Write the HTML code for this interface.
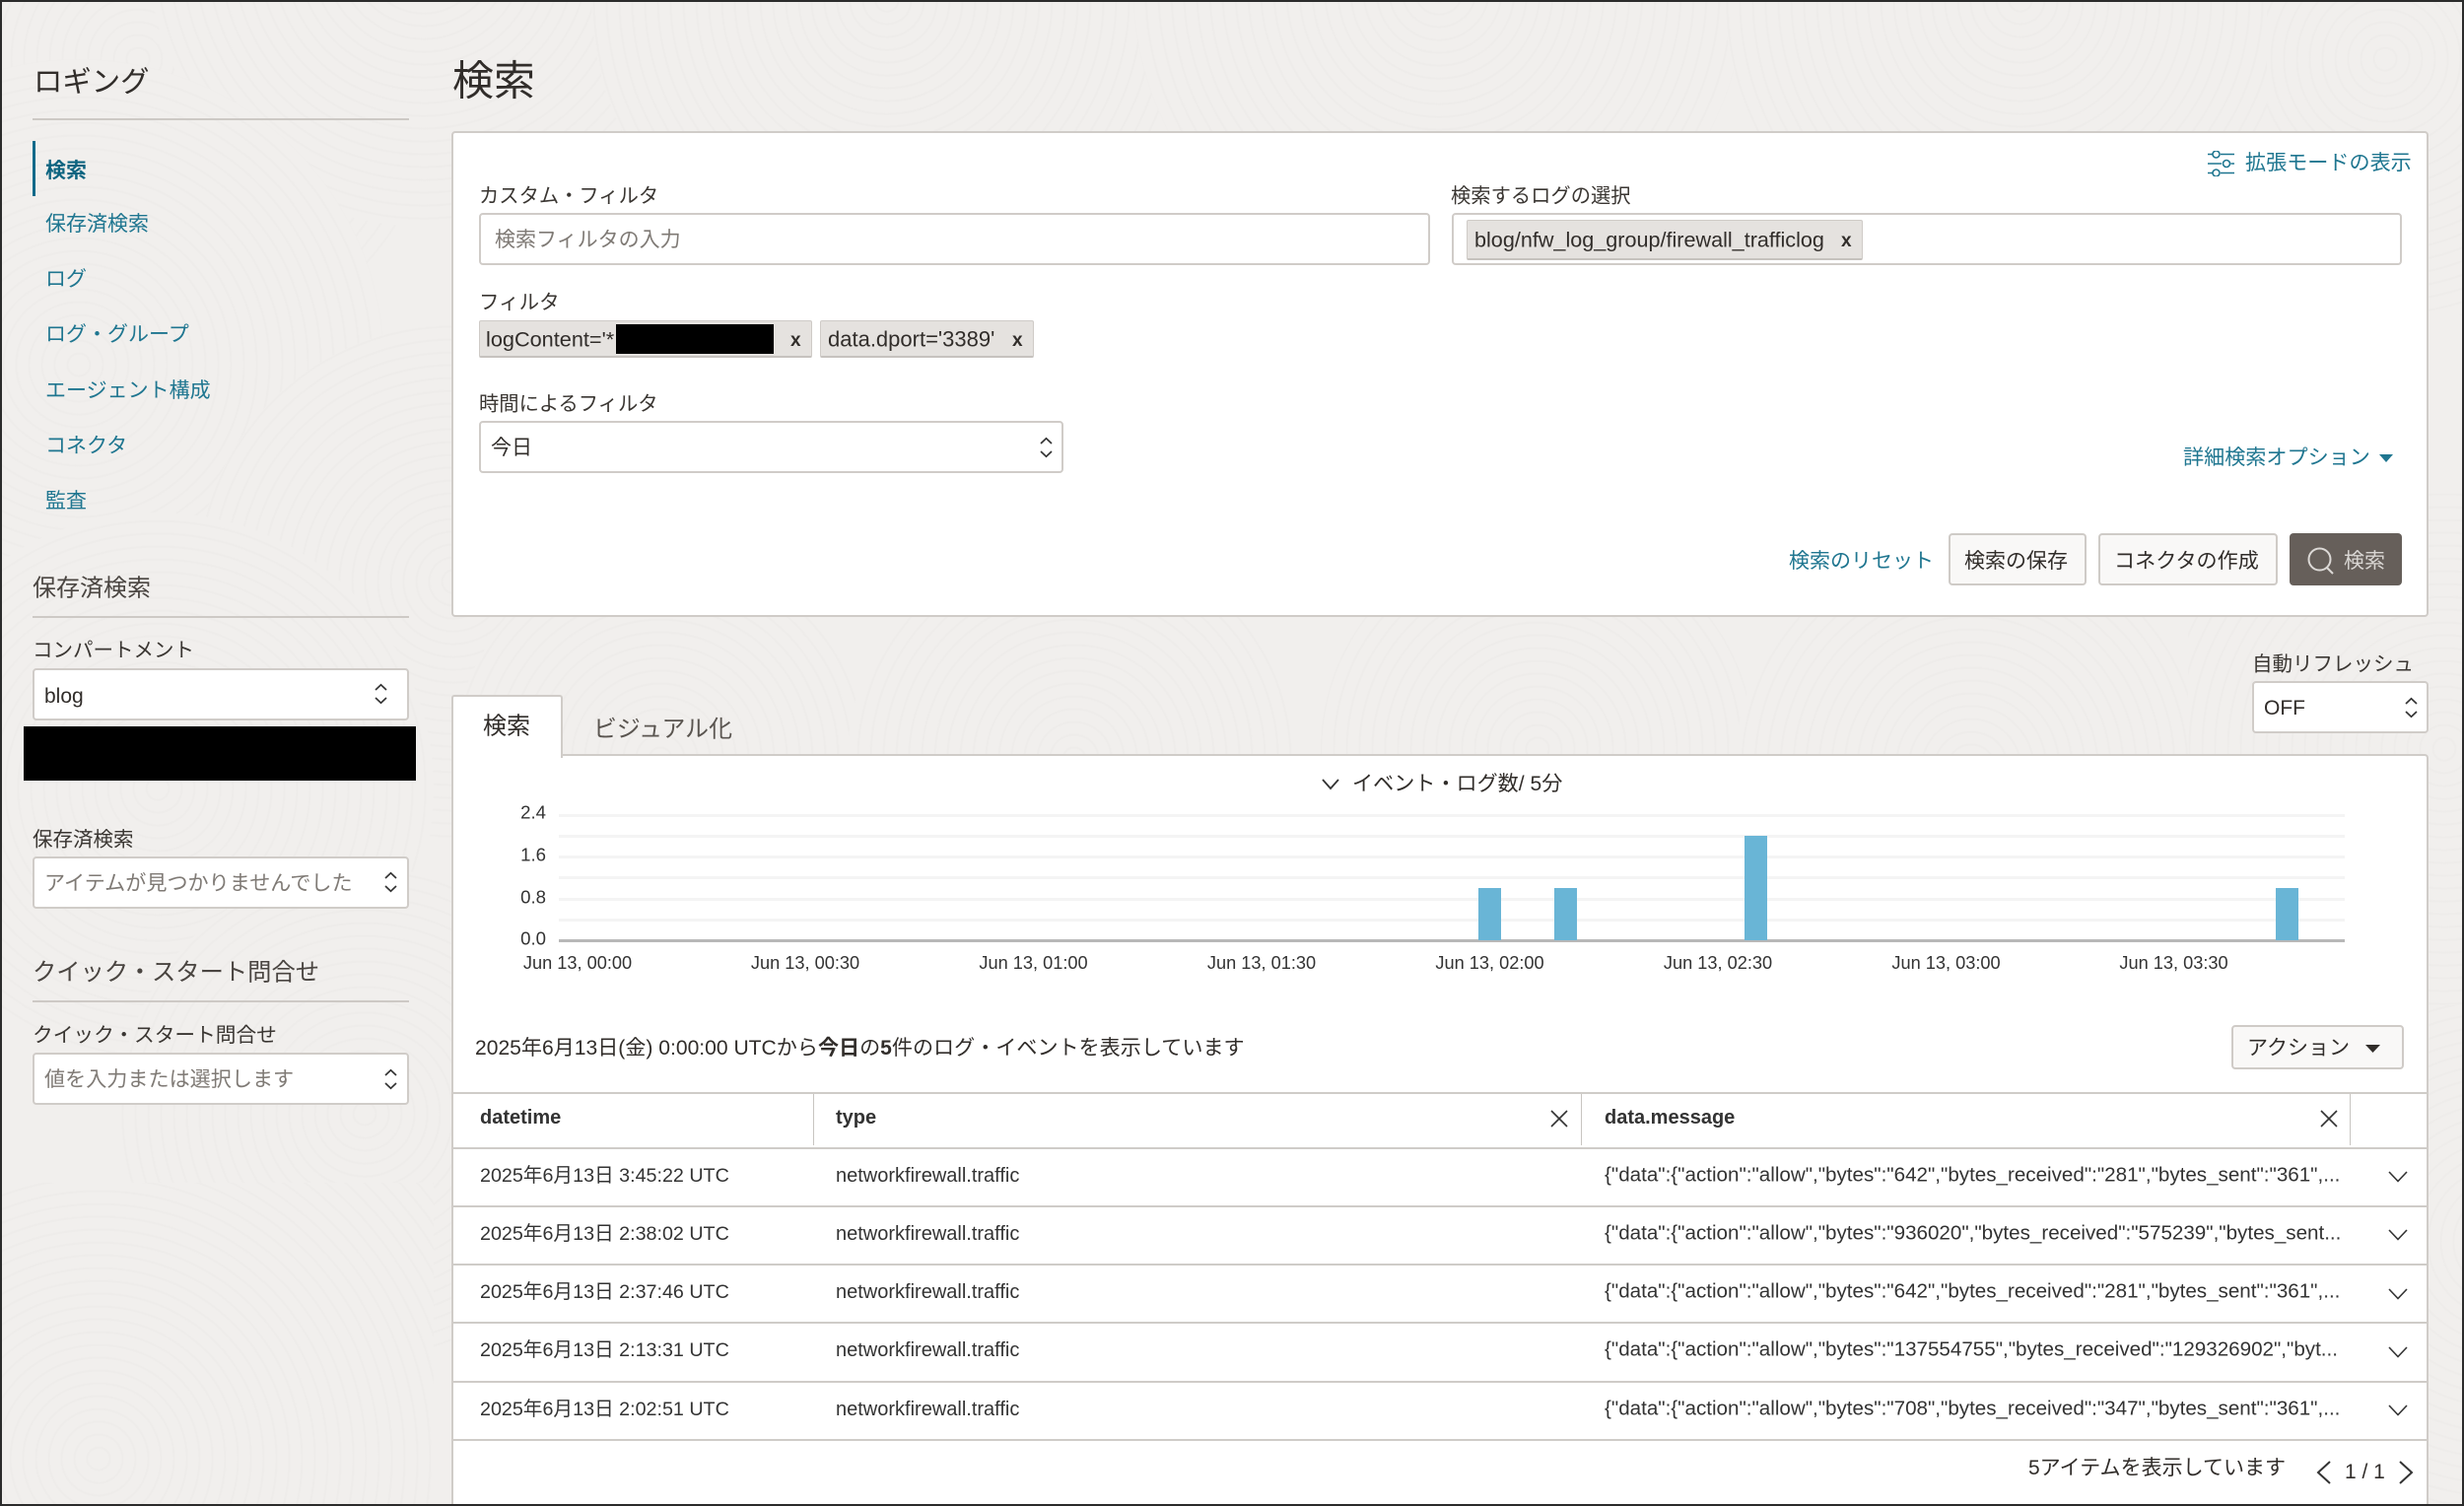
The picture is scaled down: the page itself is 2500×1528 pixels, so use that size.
<!DOCTYPE html>
<html lang="ja">
<head>
<meta charset="utf-8">
<title>検索</title>
<style>
html{margin:0;padding:0;width:2500px;height:1528px;overflow:hidden;}
body{margin:0;padding:0;width:2500px;height:1528px;overflow:hidden;position:relative;background:#f1efed;font-family:"Liberation Sans","Noto Sans CJK JP",sans-serif;color:#312d2a;}
.abs{position:absolute;box-sizing:border-box;}
.t{position:absolute;line-height:1;white-space:nowrap;transform:translateY(calc(-50% + 1.5px));font-size:21px;}
.link{color:#1f7690;}
.lab{font-size:20.5px;color:#3a3632;}
.ph{color:#7f7a75;}
.box{position:absolute;box-sizing:border-box;background:#fff;border:2px solid #d0ccc8;border-radius:4px;}
.chip{position:absolute;box-sizing:border-box;background:#e5e2df;border:1px solid #cfcbc7;border-bottom:2px solid #c6c2be;border-radius:2px;}
.btn{position:absolute;box-sizing:border-box;background:#f9f8f7;border:2px solid #cfcbc7;border-radius:4px;}
.bg{position:absolute;left:0;top:0;width:2500px;height:1528px;overflow:hidden;}
.ring{position:absolute;border-radius:50%;background:repeating-radial-gradient(circle,#f1efed 0 10px,#eeecea 11px 12px,#f1efed 13px);}
.hl{position:absolute;height:2px;background:#cdc9c5;}
.rowl{position:absolute;left:460px;width:2002px;height:2px;background:#cfccc8;}
.grid{position:absolute;left:567px;width:1812px;height:3px;background:#f4f4f4;}
.xl{position:absolute;top:977px;line-height:1;white-space:nowrap;transform:translate(-50%,-50%);font-size:18.2px;color:#333;}
.yl{position:absolute;right:1946px;line-height:1;transform:translateY(-50%);font-size:18.6px;color:#333;}
.bar{position:absolute;background:#69b5d6;width:23px;}
.c{position:absolute;font-size:20px;line-height:1;white-space:nowrap;transform:translateY(-50%);color:#333;}
.d{font-size:19.7px;}
.m{font-size:20.6px;}
.x{font-size:19px;font-weight:bold;}
svg{position:absolute;}
</style>
</head>
<body>
<!-- background swirl -->
<div class="bg">
<div class="ring" style="left:-180px;top:-260px;width:640px;height:640px"></div>
<div class="ring" style="left:150px;top:-330px;width:560px;height:560px"></div>
<div class="ring" style="left:-230px;top:60px;width:620px;height:620px"></div>
<div class="ring" style="left:200px;top:330px;width:520px;height:520px"></div>
<div class="ring" style="left:-120px;top:520px;width:560px;height:560px"></div>
<div class="ring" style="left:120px;top:880px;width:500px;height:500px"></div>
<div class="abs" style="left:0;top:1200px;width:440px;height:328px;background:repeating-radial-gradient(circle at 100px 280px,#f1efed 0 10px,#eeecea 11px 12px,#f1efed 13px)"></div>
<div class="ring" style="left:600px;top:-300px;width:600px;height:600px"></div>
<div class="ring" style="left:1150px;top:-320px;width:620px;height:620px"></div>
<div class="ring" style="left:1750px;top:-300px;width:600px;height:600px"></div>
<div class="abs" style="left:2300px;top:0;width:200px;height:320px;background:repeating-radial-gradient(circle at 120px 60px,#f1efed 0 10px,#eeecea 11px 12px,#f1efed 13px)"></div>
<div class="ring" style="left:460px;top:560px;width:420px;height:420px"></div>
<div class="ring" style="left:860px;top:540px;width:460px;height:460px"></div>
<div class="ring" style="left:1340px;top:540px;width:440px;height:440px"></div>
<div class="ring" style="left:1760px;top:540px;width:480px;height:480px"></div>
<div class="abs" style="left:2220px;top:500px;width:280px;height:520px;background:repeating-radial-gradient(circle at 260px 260px,#f1efed 0 10px,#eeecea 11px 12px,#f1efed 13px)"></div>
<div class="abs" style="left:2300px;top:1020px;width:200px;height:508px;background:repeating-radial-gradient(circle at 240px 240px,#f1efed 0 10px,#eeecea 11px 12px,#f1efed 13px)"></div>
</div>

<!-- sidebar -->
<div class="t" style="left:34px;top:82px;font-size:29.4px;color:#312d2a">ロギング</div>
<div class="hl" style="left:33px;top:120px;width:382px"></div>
<div class="abs" style="left:33px;top:143px;width:3px;height:56px;background:#0f6a8a"></div>
<div class="t link" style="left:46px;top:172px;font-weight:bold;color:#0d6480">検索</div>
<div class="t link" style="left:46px;top:226px">保存済検索</div>
<div class="t link" style="left:46px;top:282px">ログ</div>
<div class="t link" style="left:46px;top:338px">ログ・グループ</div>
<div class="t link" style="left:46px;top:395px">エージェント構成</div>
<div class="t link" style="left:46px;top:451px">コネクタ</div>
<div class="t link" style="left:46px;top:507px">監査</div>

<div class="t" style="left:33px;top:596px;font-size:24px;color:#4a4541">保存済検索</div>
<div class="hl" style="left:33px;top:625px;width:382px"></div>
<div class="t lab" style="left:33px;top:659px">コンパートメント</div>
<div class="box" style="left:33px;top:678px;width:382px;height:53px"></div>
<div class="t" style="left:45px;top:705px;color:#312d2a">blog</div>
<svg style="left:380px;top:693px" width="13" height="22" fill="none" stroke="#333" stroke-width="1.7"><path d="M1 7L6.500 1.800L12 7M1 15L6.500 20.200L12 15"/></svg>
<div class="abs" style="left:24px;top:737px;width:398px;height:55px;background:#000"></div>
<div class="t lab" style="left:33px;top:851px">保存済検索</div>
<div class="box" style="left:33px;top:869px;width:382px;height:53px"></div>
<div class="t ph" style="left:45px;top:895px;font-size:21.1px">アイテムが見つかりませんでした</div>
<svg style="left:390px;top:884px" width="13" height="22" fill="none" stroke="#333" stroke-width="1.7"><path d="M1 7L6.500 1.800L12 7M1 15L6.500 20.200L12 15"/></svg>
<div class="t" style="left:33px;top:986px;font-size:24.3px;color:#4a4541">クイック・スタート問合せ</div>
<div class="hl" style="left:33px;top:1015px;width:382px"></div>
<div class="t lab" style="left:33px;top:1050px;font-size:20.7px">クイック・スタート問合せ</div>
<div class="box" style="left:33px;top:1068px;width:382px;height:53px"></div>
<div class="t ph" style="left:45px;top:1094px;font-size:21.1px">値を入力または選択します</div>
<svg style="left:390px;top:1084px" width="13" height="22" fill="none" stroke="#333" stroke-width="1.700"><path d="M1 7L6.500 1.800L12 7M1 15L6.500 20.200L12 15"/></svg>

<!-- title -->
<div class="t" style="left:459px;top:81px;font-size:42px;color:#312d2a">検索</div>

<!-- search card -->
<div class="box" style="left:458px;top:133px;width:2006px;height:493px"></div>

<svg style="left:2240px;top:153px" width="27" height="26" fill="none" stroke="#1f7690" stroke-width="1.600"><path d="M0 3.500H4.500M13 3.500H27M0 13H14M23.500 13H27M0 22.500H4.500M13 22.500H27"/><circle cx="8.500" cy="3.500" r="3.500"/><circle cx="19" cy="13" r="3.500"/><circle cx="8.500" cy="22.500" r="3.500"/></svg>
<div class="t link" style="left:2278px;top:164px;font-size:21.1px">拡張モードの表示</div>

<div class="t lab" style="left:486px;top:198px;font-size:20.3px">カスタム・フィルタ</div>
<div class="box" style="left:486px;top:216px;width:965px;height:53px"></div>
<div class="t ph" style="left:502px;top:242px">検索フィルタの入力</div>

<div class="t lab" style="left:1472px;top:198px;font-size:20.3px">検索するログの選択</div>
<div class="box" style="left:1473px;top:216px;width:964px;height:53px"></div>
<div class="chip" style="left:1488px;top:223px;width:402px;height:41px"></div>
<div class="t" style="left:1496px;top:241.500px;font-size:21.6px">blog/nfw_log_group/firewall_trafficlog</div>
<div class="t x" style="left:1868px;top:243px">x</div>

<div class="t lab" style="left:486px;top:306px">フィルタ</div>
<div class="chip" style="left:486px;top:325px;width:338px;height:38px"></div>
<div class="t" style="left:493px;top:343px;font-size:21.7px">logContent='*</div>
<div class="abs" style="left:625px;top:329px;width:160px;height:30px;background:#000"></div>
<div class="t x" style="left:802px;top:344px">x</div>
<div class="chip" style="left:832px;top:325px;width:217px;height:38px"></div>
<div class="t" style="left:840px;top:343px;font-size:22px">data.dport='3389'</div>
<div class="t x" style="left:1027px;top:344px">x</div>

<div class="t lab" style="left:486px;top:409px;font-size:20.3px">時間によるフィルタ</div>
<div class="box" style="left:486px;top:427px;width:593px;height:53px"></div>
<div class="t" style="left:498px;top:452.500px">今日</div>
<svg style="left:1055px;top:443px" width="13" height="22" fill="none" stroke="#333" stroke-width="1.700"><path d="M1 7L6.500 1.800L12 7M1 15L6.500 20.200L12 15"/></svg>

<div class="t link" style="left:2215px;top:462.500px;font-size:21.1px">詳細検索オプション</div>
<svg style="left:2414px;top:460px" width="14" height="10"><path d="M0 1H14L7 9Z" fill="#1f7690"/></svg>

<div class="t link" style="left:1815px;top:568px">検索のリセット</div>
<div class="btn" style="left:1977px;top:541px;width:140px;height:53px"></div>
<div class="t" style="left:1993px;top:568px">検索の保存</div>
<div class="btn" style="left:2129px;top:541px;width:182px;height:53px"></div>
<div class="t" style="left:2145px;top:568px;font-size:21.1px">コネクタの作成</div>
<div class="abs" style="left:2323px;top:541px;width:114px;height:53px;background:#665f5a;border-radius:4px"></div>
<svg style="left:2341px;top:555px" width="28" height="28" fill="none" stroke="#dcd9d6" stroke-width="2"><circle cx="12.500" cy="12.500" r="11"/><path d="M20 21L26 27"/></svg>
<div class="t" style="left:2378px;top:568px;color:#d8d5d2">検索</div>

<!-- auto refresh -->
<div class="t lab" style="left:2285px;top:673px">自動リフレッシュ</div>
<div class="box" style="left:2285px;top:691px;width:179px;height:53px"></div>
<div class="t" style="left:2297px;top:716.500px">OFF</div>
<svg style="left:2440px;top:707px" width="13" height="22" fill="none" stroke="#333" stroke-width="1.700"><path d="M1 7L6.500 1.800L12 7M1 15L6.500 20.200L12 15"/></svg>

<!-- results panel -->
<div class="abs" style="left:458px;top:765px;width:2006px;height:761px;background:#fff;border:2px solid #d0ccc8;border-bottom:none;border-radius:4px 4px 0 0"></div>
<div class="abs" style="left:458px;top:705px;width:113px;height:64px;background:#fff;border:2px solid #d0ccc8;border-bottom:none;border-radius:3px 3px 0 0"></div>
<div class="t" style="left:490px;top:735.500px;font-size:24px;color:#312d2a">検索</div>
<div class="t" style="left:602px;top:738.500px;font-size:23.900px;color:#5a5550">ビジュアル化</div>

<svg style="left:1341px;top:790px" width="18" height="12" fill="none" stroke="#333" stroke-width="1.800"><path d="M1 1L9 10L17 1"/></svg>
<div class="t" style="left:1372px;top:793.500px;font-size:21.1px">イベント・ログ数/ 5分</div>

<div class="grid" style="top:826px"></div>
<div class="grid" style="top:847px"></div>
<div class="grid" style="top:868px"></div>
<div class="grid" style="top:889px"></div>
<div class="grid" style="top:911px"></div>
<div class="grid" style="top:932px"></div>
<div class="abs" style="left:567px;top:953px;width:1812px;height:3px;background:#b8b8b8"></div>
<div class="bar" style="left:1500px;top:901px;height:53px"></div>
<div class="bar" style="left:1577px;top:901px;height:53px"></div>
<div class="bar" style="left:1770px;top:848px;height:106px"></div>
<div class="bar" style="left:2309px;top:901px;height:53px"></div>
<div class="yl" style="top:825px">2.4</div>
<div class="yl" style="top:868px">1.6</div>
<div class="yl" style="top:911px">0.8</div>
<div class="yl" style="top:953px">0.0</div>
<div class="xl" style="left:586px">Jun 13, 00:00</div>
<div class="xl" style="left:817px">Jun 13, 00:30</div>
<div class="xl" style="left:1048.5px">Jun 13, 01:00</div>
<div class="xl" style="left:1280px">Jun 13, 01:30</div>
<div class="xl" style="left:1511.5px">Jun 13, 02:00</div>
<div class="xl" style="left:1743px">Jun 13, 02:30</div>
<div class="xl" style="left:1974.5px">Jun 13, 03:00</div>
<div class="xl" style="left:2205.5px">Jun 13, 03:30</div>

<div class="t" style="left:482px;top:1062px;font-size:21.08px">2025年6月13日(金) 0:00:00 UTCから<b>今日</b>の<b>5</b>件のログ・イベントを表示しています</div>
<div class="btn" style="left:2264px;top:1040px;width:175px;height:45px"></div>
<div class="t" style="left:2280px;top:1062px">アクション</div>
<svg style="left:2400px;top:1059px" width="15" height="10"><path d="M0 1H15L7.500 9Z" fill="#312d2a"/></svg>

<!-- table -->
<div class="rowl" style="top:1108px"></div>
<div class="rowl" style="top:1164px"></div>
<div class="rowl" style="top:1223px"></div>
<div class="rowl" style="top:1282px"></div>
<div class="rowl" style="top:1341px"></div>
<div class="rowl" style="top:1401px"></div>
<div class="rowl" style="top:1460px"></div>
<div class="abs" style="left:825px;top:1110px;width:1px;height:52px;background:#c8c5c1"></div>
<div class="abs" style="left:1604px;top:1110px;width:1px;height:52px;background:#c8c5c1"></div>
<div class="abs" style="left:2384px;top:1110px;width:1px;height:52px;background:#c8c5c1"></div>
<div class="c" style="left:487px;top:1133.5px;font-weight:bold">datetime</div>
<div class="c" style="left:848px;top:1133.5px;font-weight:bold">type</div>
<div class="c" style="left:1628px;top:1133.5px;font-weight:bold">data.message</div>
<svg style="left:1573px;top:1126px" width="18" height="18" fill="none" stroke="#333" stroke-width="1.600"><path d="M1 1L17 17M17 1L1 17"/></svg>
<svg style="left:2354px;top:1126px" width="18" height="18" fill="none" stroke="#333" stroke-width="1.600"><path d="M1 1L17 17M17 1L1 17"/></svg>

<div class="c d" style="left:487px;top:1193.5px">2025年6月13日 3:45:22 UTC</div>
<div class="c" style="left:848px;top:1192.5px">networkfirewall.traffic</div>
<div class="c m" style="left:1628px;top:1192.5px">{"data":{"action":"allow","bytes":"642","bytes_received":"281","bytes_sent":"361",...</div>
<div class="c d" style="left:487px;top:1252.5px">2025年6月13日 2:38:02 UTC</div>
<div class="c" style="left:848px;top:1251.5px">networkfirewall.traffic</div>
<div class="c m" style="left:1628px;top:1251.5px">{"data":{"action":"allow","bytes":"936020","bytes_received":"575239","bytes_sent...</div>
<div class="c d" style="left:487px;top:1312px">2025年6月13日 2:37:46 UTC</div>
<div class="c" style="left:848px;top:1311px">networkfirewall.traffic</div>
<div class="c m" style="left:1628px;top:1311px">{"data":{"action":"allow","bytes":"642","bytes_received":"281","bytes_sent":"361",...</div>
<div class="c d" style="left:487px;top:1371px">2025年6月13日 2:13:31 UTC</div>
<div class="c" style="left:848px;top:1370px">networkfirewall.traffic</div>
<div class="c m" style="left:1628px;top:1370px">{"data":{"action":"allow","bytes":"137554755","bytes_received":"129326902","byt...</div>
<div class="c d" style="left:487px;top:1430.5px">2025年6月13日 2:02:51 UTC</div>
<div class="c" style="left:848px;top:1429.5px">networkfirewall.traffic</div>
<div class="c m" style="left:1628px;top:1429.5px">{"data":{"action":"allow","bytes":"708","bytes_received":"347","bytes_sent":"361",...</div>

<svg style="left:2423px;top:1188px" width="20" height="12" fill="none" stroke="#333" stroke-width="1.600"><path d="M1 1L10 10.500L19 1"/></svg>
<svg style="left:2423px;top:1247px" width="20" height="12" fill="none" stroke="#333" stroke-width="1.600"><path d="M1 1L10 10.500L19 1"/></svg>
<svg style="left:2423px;top:1307px" width="20" height="12" fill="none" stroke="#333" stroke-width="1.600"><path d="M1 1L10 10.500L19 1"/></svg>
<svg style="left:2423px;top:1366px" width="20" height="12" fill="none" stroke="#333" stroke-width="1.600"><path d="M1 1L10 10.500L19 1"/></svg>
<svg style="left:2423px;top:1425px" width="20" height="12" fill="none" stroke="#333" stroke-width="1.600"><path d="M1 1L10 10.500L19 1"/></svg>

<div class="t" style="left:2058px;top:1488px">5アイテムを表示しています</div>
<svg style="left:2350px;top:1482px" width="15" height="24" fill="none" stroke="#333" stroke-width="2"><path d="M14 1L2 12L14 23"/></svg>
<div class="t" style="left:2379px;top:1491.500px;font-size:21px">1 / 1</div>
<svg style="left:2434px;top:1482px" width="15" height="24" fill="none" stroke="#333" stroke-width="2"><path d="M1 1L13 12L1 23"/></svg>

<!-- outer frame -->
<div class="abs" style="left:0;top:0;width:2500px;height:1528px;border:2px solid #2b2b2b;pointer-events:none"></div>
</body>
</html>
